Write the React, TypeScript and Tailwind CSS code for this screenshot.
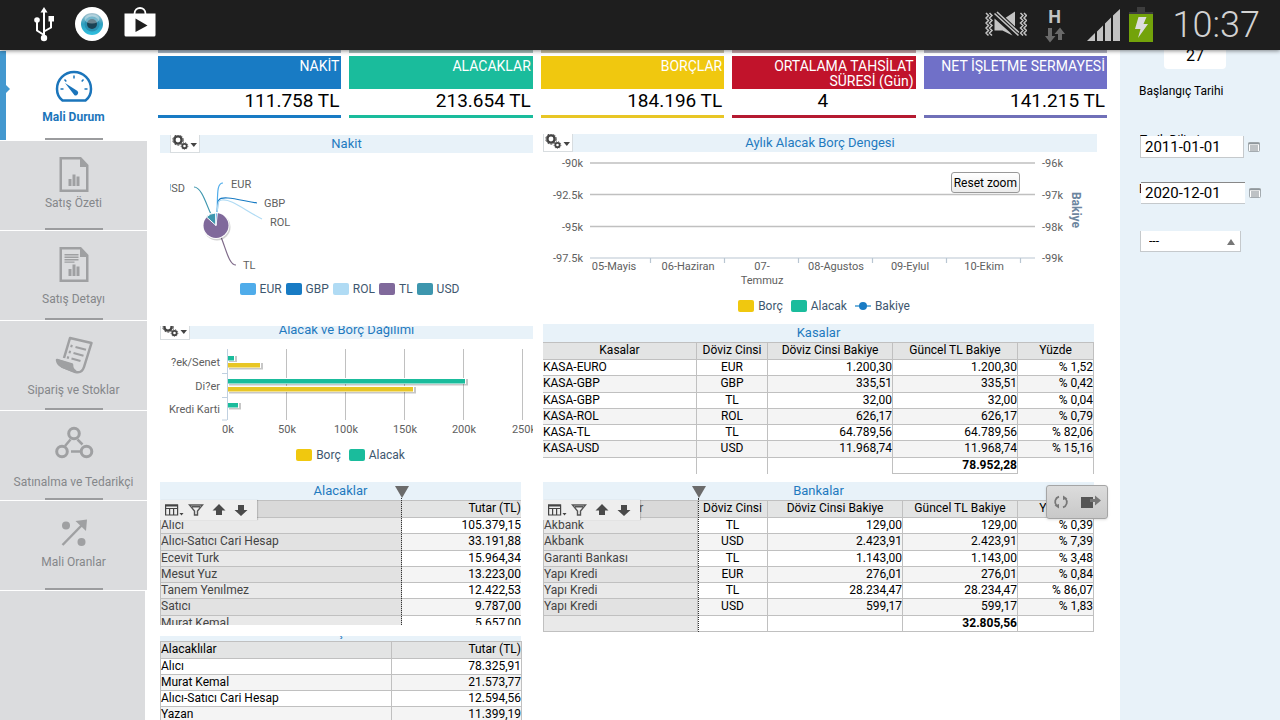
import type { ReactNode } from "react";

const kpis = [
  { title: "NAKİT", value: "111.758 TL", bg: "bg-[#187bc4]", line: "border-[#187bc4]", tint: "bg-[#a5b5c4]", align: "text-right" },
  { title: "ALACAKLAR", value: "213.654 TL", bg: "bg-[#1abc9c]", line: "border-[#1abc9c]", tint: "bg-[#a6bfba]", align: "text-right" },
  { title: "BORÇLAR", value: "184.196 TL", bg: "bg-[#f0c80f]", line: "border-[#e8c625]", tint: "bg-[#c6bfa2]", align: "text-right" },
  { title: "ORTALAMA TAHSİLAT SÜRESİ (Gün)", value: "4", bg: "bg-[#c1132b]", line: "border-[#b51a31]", tint: "bg-[#c4a4a8]", align: "text-center" },
  { title: "NET İŞLETME SERMAYESİ", value: "141.215 TL", bg: "bg-[#7070c8]", line: "border-[#7070b8]", tint: "bg-[#b5b5c4]", align: "text-right" },
];

const kasalar = [
  ["KASA-EURO", "EUR", "1.200,30", "1.200,30", "% 1,52"],
  ["KASA-GBP", "GBP", "335,51", "335,51", "% 0,42"],
  ["KASA-GBP", "TL", "32,00", "32,00", "% 0,04"],
  ["KASA-ROL", "ROL", "626,17", "626,17", "% 0,79"],
  ["KASA-TL", "TL", "64.789,56", "64.789,56", "% 82,06"],
  ["KASA-USD", "USD", "11.968,74", "11.968,74", "% 15,16"],
];

const bankalar = [
  ["Akbank", "TL", "129,00", "129,00", "% 0,39"],
  ["Akbank", "USD", "2.423,91", "2.423,91", "% 7,39"],
  ["Garanti Bankası", "TL", "1.143,00", "1.143,00", "% 3,48"],
  ["Yapı Kredi", "EUR", "276,01", "276,01", "% 0,84"],
  ["Yapı Kredi", "TL", "28.234,47", "28.234,47", "% 86,07"],
  ["Yapı Kredi", "USD", "599,17", "599,17", "% 1,83"],
];

const alacaklar = [
  ["Alıcı", "105.379,15"],
  ["Alıcı-Satıcı Cari Hesap", "33.191,88"],
  ["Ecevit Turk", "15.964,34"],
  ["Mesut Yuz", "13.223,00"],
  ["Tanem Yenılmez", "12.422,53"],
  ["Satıcı", "9.787,00"],
  ["Murat Kemal", "5.657,00"],
];

const alacaklilar = [
  ["Alıcı", "78.325,91"],
  ["Murat Kemal", "21.573,77"],
  ["Alıcı-Satıcı Cari Hesap", "12.594,56"],
  ["Yazan", "11.399,19"],
];

/* ---------- status bar ---------- */

const StatusBar = () => (
  <header className="relative z-20 flex h-[50px] shrink-0 items-center justify-between bg-[#1e1e1e] pl-8 pr-5 shadow-[0_1px_4px_rgba(0,0,0,0.45)]">
    <div className="flex items-center gap-4">
      <svg className="h-9 w-6" viewBox="0 0 24 36" fill="none" stroke="#fff" strokeWidth="2">
        <path d="M12 5v26M12 28l-7-4.5V14M12 24.500l7-4V12" />
        <path d="M12 0l3.500 5.500h-7z" fill="#fff" stroke="none" />
        <circle cx="5" cy="13" r="2.800" fill="#fff" stroke="none" />
        <rect x="16.500" y="9" width="5.500" height="5.500" fill="#fff" stroke="none" />
        <circle cx="12" cy="31" r="3.200" fill="#fff" stroke="none" />
      </svg>
      <svg className="size-10" viewBox="0 0 40 40">
        <defs>
          <linearGradient id="iris" x1="0" y1="0" x2="0" y2="1">
            <stop offset="0" stopColor="#a9c4d0" />
            <stop offset="0.5" stopColor="#2f9fbf" />
            <stop offset="1" stopColor="#2fc0e0" />
          </linearGradient>
        </defs>
        <circle cx="20" cy="19" r="17" fill="#fff" />
        <circle cx="20" cy="19" r="11" fill="url(#iris)" />
        <circle cx="20" cy="19" r="7.500" fill="#2a8fb0" />
        <circle cx="20" cy="19" r="5" fill="#1b4254" />
        <ellipse cx="20" cy="14" rx="7.500" ry="4.500" fill="#fff" opacity="0.35" />
      </svg>
      <svg className="-ml-1 h-[38px] w-8" viewBox="0 0 32 38">
        <path d="M10.500 8c0-8 11-8 11 0" fill="none" stroke="#fff" strokeWidth="1.800" />
        <path d="M.5 7.500h31V29a1.500 1.500 0 0 1-1.500 1.500H2A1.500 1.500 0 0 1 .5 29z" fill="#fff" />
        <path d="M11.500 12.500v13.500l12-6.500z" fill="#1e1e1e" />
      </svg>
    </div>
    <div className="flex items-center gap-2">
      <svg className="mr-1 h-7 w-[42px]" viewBox="0 0 42 28" fill="none" stroke="#c3c3c3">
        <path
          d="M1 2l2.500 2.500L1 7l2.500 2.500L1 12l2.500 2.500L1 17l2.500 2.500L1 22l2.500 2.500M4.500 2L7 4.500 4.500 7 7 9.500 4.500 12 7 14.500 4.500 17 7 19.500 4.500 22 7 24.500M35.500 2L38 4.500 35.500 7 38 9.500 35.500 12l2.500 2.500-2.500 2.500 2.500 2.500-2.500 2.500 2.500 2.500M39 2l2.500 2.500L39 7l2.500 2.500L39 12l2.500 2.500L39 17l2.500 2.500L39 22l2.500 2.500"
          strokeWidth="1.500"
        />
        <path d="M19.500 7.500L30 .5v16zM9.500 7.500l15 13.500 3 3.500-10-5h-8z" fill="#c3c3c3" stroke="none" />
        <path d="M11 1l23 21.500" stroke="#1e1e1e" strokeWidth="5" />
        <path d="M9.500 2.500l24 22M12 1l22 20.500" strokeWidth="1.600" />
      </svg>
      <div className="mr-2 flex w-8 flex-col items-center">
        <span className="text-lg/5 font-bold text-[#c3c3c3]">H</span>
        <svg className="h-4 w-5" viewBox="0 0 20 16" fill="#6a6a6a">
          <path d="M3 1h4v8h3.500L5 15.500 0 9h3z" />
          <path d="M13 13V7H9.500L15 .5 20 7h-3v6z" />
        </svg>
      </div>
      <svg className="h-8 w-[34px]" viewBox="0 0 34 32" fill="#c3c3c3">
        <path d="M0 32l8-8v8zM10 22.500l6-6V32h-6zM18 14.500l6-6V32h-6zM26 6.500L33 0v32h-7z" />
      </svg>
      <svg className="h-9 w-6" viewBox="0 0 24 36">
        <rect x="8" y="0" width="8" height="5" fill="#3d3d3d" />
        <rect x="0" y="5" width="24" height="2" fill="#3d3d3d" />
        <rect x="0" y="7" width="24" height="28" fill="#73a30a" />
        <path d="M9.500 10h8l-3 7h4.500L9 31l2.500-9H6z" fill="#ddd" />
      </svg>
      <span className="ml-3 text-[36px]/10 font-light text-[#d2d2d2]">10:37</span>
    </div>
  </header>
);

/* ---------- sidebar ---------- */

const GaugeIcon = () => (
  <svg className="h-[43px] w-10" viewBox="0 0 40 43" fill="none" stroke="#1b75bb" strokeWidth="2.500">
    <path d="M8.500 34.500C4.500 31.500 3 27.500 3 23a17 17 0 0 1 34 0c0 4.500-1.500 8.500-5.500 11.500z" strokeLinejoin="round" />
    <path d="M20 9.500v3M29.500 13.500l-1.800 2M10.500 13.500l1.800 2M33.500 23h-3M6.500 23h3" strokeWidth="1.500" />
    <path d="M11 17l12.500 8a2.700 2.700 0 0 1-3 4.300z" fill="#1b75bb" stroke="none" />
  </svg>
);

const ReportIcon = ({ detailed }: { detailed?: boolean }) => (
  <svg className={detailed ? "h-[45px] w-10" : "h-[39px] w-10"} viewBox={detailed ? "0 0 40 45" : "0 0 40 39"} fill="#9fa0a2">
    <path d="M5.500 1H27l7.500 8v27h-29zM8 3.500v30h24V11h-6V3.500z" fillRule="evenodd" />
    <path d="M14.500 23h3v7h-3zM18.500 18.500h3V30h-3zM22.500 20.500h3V30h-3z" />
    {detailed && <path d="M10.500 8h14v1.600h-14zM10.500 10.500h14v1.600h-14zM10.500 13h14v1.600h-14zM10.500 15.500h10v1.200h-10z" />}
  </svg>
);

const OrderIcon = () => (
  <svg className="h-[46px] w-10" viewBox="0 0 40 46" fill="none" stroke="#9fa0a2" strokeWidth="2.500" strokeLinejoin="round">
    <path d="M10 22L16 2l21.500 5L30 31c-1.500 4.500-4.500 6-8.500 5L8 30.500c-3-1.500-4.500-3.500-5-6.500l15 4.500c0 4 1.500 6 4 7" />
    <path d="M3.500 24.500l14 4.500c0 2.500.5 4.500 2 6L8 30.500z" fill="#9fa0a2" />
    <path d="M21.500 11l10.500 2.800M19.500 17l10 2.800M17.500 22.500l9 2.500" strokeWidth="2.200" />
    <path d="M16.500 9.800l2 .6M14.800 15.700l2 .6M13 21.300l2 .6" strokeWidth="2.500" />
  </svg>
);

const NetworkIcon = () => (
  <svg className="h-12 w-10" viewBox="0 0 40 48" fill="none" stroke="#9fa0a2" strokeWidth="3">
    <circle cx="20" cy="7.500" r="5.300" />
    <circle cx="8" cy="25.500" r="5.300" />
    <circle cx="32.500" cy="25.500" r="5.300" />
    <path d="M16.500 13.500L11 20M23.500 13.500l5 5M17 25.500h9.500" strokeWidth="2.500" />
  </svg>
);

const RatioIcon = () => (
  <svg className="h-[38px] w-10" viewBox="0 0 40 38" fill="#9fa0a2">
    <path d="M8.500 29L29 8" stroke="#9fa0a2" strokeWidth="2.500" />
    <path d="M21.500 5L33 3.500 32 15z" />
    <circle cx="12" cy="9.500" r="4" />
    <circle cx="27.500" cy="26" r="4" />
  </svg>
);

const menu: { label: string; icon: ReactNode; active?: boolean }[] = [
  { label: "Mali Durum", icon: <GaugeIcon />, active: true },
  { label: "Satış Özeti", icon: <ReportIcon /> },
  { label: "Satış Detayı", icon: <ReportIcon detailed /> },
  { label: "Sipariş ve Stoklar", icon: <OrderIcon /> },
  { label: "Satınalma ve Tedarikçi", icon: <NetworkIcon /> },
  { label: "Mali Oranlar", icon: <RatioIcon /> },
];

const Sidebar = () => (
  <nav className="flex w-[147px] shrink-0 flex-col pt-px">
    {menu.map((item) => (
      <a
        key={item.label}
        href="#"
        className={
          item.active
            ? "relative flex h-[90px] shrink-0 flex-col items-center border-b border-white bg-white pt-[15px] text-[#1b75bb]"
            : "relative flex h-[90px] shrink-0 flex-col items-center border-b border-white bg-[#dbdcde] pt-[15px] text-[#85878a]"
        }
      >
        {item.icon}
        <span className={item.active ? "whitespace-nowrap text-xs/4 font-bold" : "whitespace-nowrap text-xs/4"}>{item.label}</span>
        {item.active && (
          <span className="absolute inset-y-0 left-0 w-1.5 bg-[#4398cf]">
            <svg className="absolute left-1.5 top-[34px] h-2 w-1" viewBox="0 0 4 8" fill="#4398cf">
              <path d="M0 0l4 4-4 4z" />
            </svg>
          </span>
        )}
        <span className="absolute bottom-0 h-0.5 w-[58px] bg-[#9b9c9e]" />
      </a>
    ))}
    <div className="mr-0.5 flex-1 bg-[#dbdcde]" />
  </nav>
);

/* ---------- shared pieces ---------- */

const PanelTitle = ({ children, height = "h-[18px]" }: { children: ReactNode; height?: string }) => (
  <h2 className={`${height} flex flex-col items-center justify-end overflow-hidden bg-[#e8f2f9] text-[13px]/[18px] text-[#1f7abf]`}>
    <span className="shrink-0">{children}</span>
  </h2>
);

const GearButton = ({ className }: { className: string }) => (
  <button
    type="button"
    aria-label="Ayarlar"
    className={`${className} absolute top-0 flex items-end overflow-hidden border border-t-0 border-[#d8dde0] bg-white`}
  >
    <svg className="h-[18px] w-7 shrink-0" viewBox="0 0 28 18" fill="none" stroke="#444">
      <circle cx="7" cy="6" r="3.600" strokeWidth="2.400" />
      <circle cx="7" cy="6" r="5.200" strokeWidth="1" strokeDasharray="2 1.300" />
      <circle cx="13.500" cy="12" r="2.200" strokeWidth="1.800" />
      <circle cx="13.500" cy="12" r="3.400" strokeWidth="0.800" strokeDasharray="1.300 1" />
      <path d="M19.500 9h6.500l-3.200 4z" fill="#444" stroke="none" />
    </svg>
  </button>
);

const LegendItem = ({ color, label }: { color: string; label: string }) => (
  <span className="flex items-center gap-1">
    <span className={`${color} h-3 w-4 rounded-xs`} />
    {label}
  </span>
);

const GridToolbar = () => (
  <div className="absolute left-0 top-0 flex h-5 w-[97px] items-center gap-2 bg-[#eeeeee] pl-1 shadow-[1px_0_1px_rgba(0,0,0,0.15)]">
    <button type="button" aria-label="Kolonlar">
      <svg className="h-4 w-5" viewBox="0 0 20 16" fill="none" stroke="#444" strokeWidth="1.200">
        <path d="M1.600 3h12v10h-12zM1.600 6.500h12M5.600 6v7M9.600 6v7" />
        <path d="M1 2.500h13v2H1z" fill="#444" stroke="none" />
        <path d="M15.500 11h4l-2 2.500z" fill="#444" stroke="none" />
      </svg>
    </button>
    <button type="button" aria-label="Filtrele" className="-ml-1">
      <svg className="h-4 w-4" viewBox="0 0 16 16" fill="none" stroke="#555" strokeWidth="1.400">
        <path d="M1.500 3h13L9.500 9v4h-3V9zM4 4.800h8" />
      </svg>
    </button>
    <button type="button" aria-label="Artan sırala">
      <svg className="h-4 w-3.5" viewBox="0 0 14 16" fill="#4a4a4a">
        <path d="M7 2l6.500 6.500H10V13H4V8.500H.5z" />
      </svg>
    </button>
    <button type="button" aria-label="Azalan sırala">
      <svg className="h-4 w-3.5" viewBox="0 0 14 16" fill="#4a4a4a">
        <path d="M7 14L.5 8H4V3h6v5h3.500z" />
      </svg>
    </button>
  </div>
);

// freeze handle with the dotted line under it
const FreezeMarker = ({ className }: { className: string }) => (
  <div className={`${className} absolute -top-3.5 bottom-0 flex flex-col items-center`}>
    <svg className="h-3 w-3.5 shrink-0" viewBox="0 0 14 12" fill="#6b6b6b">
      <path d="M0 0h14L7 12z" />
    </svg>
    <span className="flex-1 border-l border-dotted border-[#333]" />
  </div>
);

const cell = "overflow-visible whitespace-nowrap border-b border-r border-[#c0c0c0] p-0 align-top";

type CurrencyTableProps = { name: string; rows: string[][]; total: string; cols: string[]; frozen?: boolean };

const CurrencyTable = ({ name, rows, total, cols, frozen }: CurrencyTableProps) => (
  <table className="h-[132px] w-full table-fixed border-separate border-spacing-0 border-t border-[#c0c0c0] text-xs/[14px] text-black">
    <colgroup>
      {cols.map((c, i) => (
        <col key={i} className={c} />
      ))}
    </colgroup>
    <thead>
      <tr className="h-[17px] bg-[#e3e4e4]">
        <th className={frozen ? `${cell} bg-[#d9d9d9] font-normal text-[#555]` : `${cell} font-normal`}>{name}</th>
        {["Döviz Cinsi", "Döviz Cinsi Bakiye", "Güncel TL Bakiye", "Yüzde"].map((h) => (
          <th key={h} className={`${cell} font-normal`}>
            {h}
          </th>
        ))}
      </tr>
    </thead>
    <tbody>
      {rows.map((row, r) => (
        <tr key={r} className={r % 2 ? "bg-[#f4f4f4]" : "bg-white"}>
          <td className={frozen ? `${cell} ${r % 2 ? "bg-[#e2e2e2]" : "bg-[#e9e9e9]"} border-l text-[#444]` : cell}>{row[0]}</td>
          <td className={`${cell} text-center`}>{row[1]}</td>
          <td className={`${cell} text-right`}>{row[2]}</td>
          <td className={`${cell} text-right`}>{row[3]}</td>
          <td className={`${cell} text-right`}>{row[4]}</td>
        </tr>
      ))}
      <tr>
        <td className={frozen ? `${cell} border-l bg-[#e9e9e9]` : "border-r border-[#c0c0c0]"} />
        <td className={frozen ? cell : "border-r border-[#c0c0c0]"} />
        <td className={frozen ? cell : "border-r border-[#c0c0c0]"} />
        <td className={`${cell} text-right font-bold`}>{total}</td>
        <td className={frozen ? cell : "border-r border-[#c0c0c0]"} />
      </tr>
    </tbody>
  </table>
);

type AmountTableProps = { name: string; rows: string[][]; cols: string[]; frozen?: boolean };

const AmountTable = ({ name, rows, cols, frozen }: AmountTableProps) => (
  <table
    className={
      frozen
        ? "h-[132px] w-full table-fixed border-separate border-spacing-0 border-l border-t border-[#c0c0c0] text-xs/[14px] text-black"
        : "h-[82px] w-full table-fixed border-separate border-spacing-0 border-l border-t border-[#c0c0c0] text-xs/[14px] text-black"
    }
  >
    <colgroup>
      {cols.map((c, i) => (
        <col key={i} className={c} />
      ))}
    </colgroup>
    <thead>
      <tr className="h-[17px] bg-[#e3e4e4]">
        <th className={frozen ? `${cell} bg-[#d9d9d9] text-left font-normal` : `${cell} text-left font-normal`}>{name}</th>
        <th className={`${cell} text-right font-normal`}>Tutar (TL)</th>
      </tr>
    </thead>
    <tbody>
      {rows.map((row, r) => (
        <tr key={r} className={r % 2 ? "bg-[#f4f4f4]" : "bg-white"}>
          <td className={frozen ? `${cell} ${r % 2 ? "bg-[#e2e2e2]" : "bg-[#e9e9e9]"} text-[#444]` : cell}>{row[0]}</td>
          <td className={`${cell} text-right`}>{row[1]}</td>
        </tr>
      ))}
    </tbody>
  </table>
);

/* ---------- charts ---------- */

const CashPie = () => (
  <svg className="h-[127px] w-full" viewBox="0 0 373 127" fontSize="11" fill="none">
    <g strokeWidth="1.200">
      <path d="M34 34c8 0 13 20 17 27" stroke="#3d96ae" />
      <path d="M63 30c-7 0-5 14-6 31" stroke="#4facea" />
      <path d="M97 50c-18-3-35-8-38-3-2 2-1 8-2 14" stroke="#187bc4" />
      <path d="M102 66C86 58 70 45 62 47c-5 0-4 6-5 14" stroke="#b0dbf4" />
      <path d="M61 84c5 12 8 28 15 28" stroke="#7f6b8a" />
    </g>
    <circle cx="57" cy="74" r="13.500" fill="#000" opacity="0.18" />
    <circle cx="56" cy="72.500" r="13.500" fill="#fff" />
    <circle cx="56" cy="72.500" r="12.500" fill="#80699b" />
    <path d="M56 72.500L46.500 64A12.500 12.500 0 0 1 55.500 60z" fill="#3d96ae" stroke="#fff" />
    <path d="M56 72.500L55.500 60h2z" fill="#4facea" stroke="#fff" strokeWidth="0.800" />
    <g fill="#606060">
      <text x="4" y="39">USD</text>
      <text x="71" y="35">EUR</text>
      <text x="104" y="54">GBP</text>
      <text x="110" y="73">ROL</text>
      <text x="83" y="116">TL</text>
    </g>
    <path d="M0 25h10v20H0z" fill="#fff" />
  </svg>
);

const distribution = [
  { y: 17, w: 6, color: "#1abc9c" },
  { y: 24, w: 32, color: "#e8c625" },
  { y: 40, w: 237, color: "#1abc9c" },
  { y: 48, w: 185, color: "#e8c625" },
  { y: 64, w: 10, color: "#1abc9c" },
];

const DistributionChart = () => (
  <svg className="h-[105px] w-full" viewBox="0 0 373 105" fontSize="11" fill="#606060">
    <path d="M126.500 10v71M185.500 10v71M244.500 10v71M303.500 10v71M362.500 10v71" stroke="#c0c0c0" />
    <path d="M67.500 10v71M62 34.500h5M62 58.500h5M62 81h5" stroke="#c0d0e0" />
    {distribution.map((b) => (
      <g key={b.y}>
        <rect x="69" y={b.y} width={b.w + 2} height="6.500" fill="#000" opacity="0.22" />
        <rect x="68" y={b.y - 1} width={b.w + 1} height="6" fill="#fff" />
        <rect x="68" y={b.y} width={b.w} height="4.500" fill={b.color} />
      </g>
    ))}
    <g textAnchor="end">
      <text x="60" y="27">?ek/Senet</text>
      <text x="60" y="51">Di?er</text>
      <text x="60" y="74">Kredi Karti</text>
    </g>
    <g textAnchor="middle">
      <text x="68" y="94">0k</text>
      <text x="127" y="94">50k</text>
      <text x="186" y="94">100k</text>
      <text x="245" y="94">150k</text>
      <text x="304" y="94">200k</text>
      <text x="364" y="94">250k</text>
    </g>
  </svg>
);

const BalanceChart = () => (
  <svg className="h-[145px] w-full" viewBox="0 0 554 145" fontSize="11" fill="#606060">
    <path d="M47 11h445M47 42.500h445M47 74.500h445" stroke="#c0c0c0" strokeWidth="1.500" />
    <path d="M47 106h445M107.500 106v5M181.500 106v5M255.500 106v5M329.500 106v5M403.500 106v5M477.500 106v5" stroke="#b9c6d2" strokeWidth="1.200" />
    <g textAnchor="end">
      <text x="40" y="15">-90k</text>
      <text x="40" y="47">-92.5k</text>
      <text x="40" y="79">-95k</text>
      <text x="40" y="110">-97.5k</text>
    </g>
    <g>
      <text x="499" y="15">-96k</text>
      <text x="499" y="47">-97k</text>
      <text x="499" y="79">-98k</text>
      <text x="499" y="110">-99k</text>
    </g>
    <g textAnchor="middle">
      <text x="71" y="118">05-Mayis</text>
      <text x="145" y="118">06-Haziran</text>
      <text x="219" y="118">07-</text>
      <text x="219" y="132">Temmuz</text>
      <text x="293" y="118">08-Agustos</text>
      <text x="367" y="118">09-Eylul</text>
      <text x="441" y="118">10-Ekim</text>
    </g>
    <text transform="translate(529 58) rotate(90)" textAnchor="middle" fontSize="12" fontWeight="bold" fill="#6d869f">
      Bakiye
    </text>
  </svg>
);

/* ---------- filters ---------- */

const CalendarIcon = () => (
  <svg className="h-3 w-3 shrink-0" viewBox="0 0 12 12" fill="none" stroke="#8f979c" strokeWidth="0.800">
    <rect x="0.500" y="1.500" width="11" height="9" rx="1" fill="#fff" />
    <path d="M.5 2.500h11" strokeWidth="1.600" />
    <path d="M2 5h8M2 7h8M2 9h8M3 4v6M5 4v6M7 4v6M9 4v6" strokeWidth="0.700" />
  </svg>
);

const Filters = () => (
  <aside className="flex w-40 shrink-0 flex-col bg-[#e8f2f9] pl-5 text-xs text-black">
    <div className="ml-6 flex h-[19px] w-[62px] justify-center overflow-hidden rounded-b bg-white text-base/3">27</div>
    <label htmlFor="start" className="-ml-px mt-3.5 leading-4">
      Başlangıç Tarihi
    </label>
    <div className="mt-[34px] h-[3px] overflow-hidden leading-[14px]">
      <span className="block">Tarih Dilimi</span>
    </div>
    <div className="flex items-center gap-1">
      <input id="start" type="text" defaultValue="2011-01-01" className="h-[22px] w-[104px] border border-t-0 border-[#c5c9cc] bg-white px-1 text-[15px]" />
      <CalendarIcon />
    </div>
    <div className="relative mt-6 flex items-center gap-1">
      <label htmlFor="end" className="absolute -left-px top-0 leading-[14px]">
        Bitiş Tarihi
      </label>
      <input id="end" type="text" defaultValue="2020-12-01" className="relative ml-px h-[22px] w-[104px] border border-x-0 border-b-[#c5c9cc] border-t-[#888] bg-white px-1 text-[15px]" />
      <CalendarIcon />
    </div>
    <div className="relative mt-[27px] w-[101px]">
      <select aria-label="Filtre" className="block h-[21px] w-full appearance-none border border-t-0 border-[#c5c9cc] bg-white pl-2 text-xs">
        <option>---</option>
      </select>
      <svg className="pointer-events-none absolute right-1.5 top-2 h-1.5 w-2" viewBox="0 0 8 6" fill="#777">
        <path d="M0 6l4-6 4 6z" />
      </svg>
    </div>
  </aside>
);

const App = () => (
  <div className="flex h-screen flex-col overflow-hidden bg-white font-['Roboto',sans-serif]">
    <StatusBar />
    <div className="flex min-h-0 flex-1">
      <Sidebar />

      <main className="min-w-0 flex-1 overflow-hidden">
        {/* KPI cards */}
        <section className="grid grid-cols-5 gap-2 pl-[11px] pr-[13px]">
          {kpis.map((k) => (
            <div key={k.title} className={`${k.line} border-b-[3px]`}>
              <div className={`${k.tint} h-[3px]`} />
              <div className={`${k.bg} mt-[3px] h-[33px] overflow-hidden pr-0.5 pt-[3px] text-right text-sm/[15px] text-white`}>{k.title}</div>
              <div className={`${k.align} h-[26px] pr-0.5 text-[19px]/6`}>{k.value}</div>
            </div>
          ))}
        </section>

        <div className="mt-4 grid grid-cols-[373fr_554fr] gap-2.5 pl-[13px] pr-[23px]">
          <div className="min-w-0">
            <section className="relative mt-px h-[191px]">
              <PanelTitle>Nakit</PanelTitle>
              <GearButton className="left-2.5 h-[18px]" />
              <CashPie />
              <div className="flex justify-center gap-1 pl-1.5 text-xs/[18px] text-[#3e576f]">
                <LegendItem color="bg-[#4facea]" label="EUR" />
                <LegendItem color="bg-[#187bc4]" label="GBP" />
                <LegendItem color="bg-[#b0dbf4]" label="ROL" />
                <LegendItem color="bg-[#80699b]" label="TL" />
                <LegendItem color="bg-[#3d96ae]" label="USD" />
              </div>
            </section>

            <section className="relative h-[156px]">
              <PanelTitle height="h-[13px]">Alacak ve Borç Dağılımı</PanelTitle>
              <GearButton className="left-0 h-[14px]" />
              <DistributionChart />
              <div className="mt-0.5 flex justify-center gap-2 pl-2 text-xs/[18px] text-[#3e576f]">
                <LegendItem color="bg-[#f0c80f]" label="Borç" />
                <LegendItem color="bg-[#1abc9c]" label="Alacak" />
              </div>
            </section>

            <section className="mr-3">
              <PanelTitle>Alacaklar</PanelTitle>
              <div className="relative">
                <div className="h-[125px] overflow-hidden">
                  <AmountTable name="Alacaklar" rows={alacaklar} cols={["w-[241px]", "w-[120px]"]} frozen />
                </div>
                <GridToolbar />
                <FreezeMarker className="left-[65%]" />
              </div>
            </section>

            <section className="mr-3 mt-[11px]">
              <PanelTitle height="h-[5px]">ş</PanelTitle>
              <AmountTable name="Alacaklılar" rows={alacaklilar} cols={["w-[231px]", "w-[130px]"]} />
            </section>
          </div>

          <div className="min-w-0">
            <section className="relative h-[190px]">
              <PanelTitle>Aylık Alacak Borç Dengesi</PanelTitle>
              <GearButton className="left-0 h-[18px]" />
              <div className="relative">
                <BalanceChart />
                <button
                  type="button"
                  className="absolute right-[77px] top-5 h-[21px] rounded-[3px] border border-[#999] bg-gradient-to-b from-white to-[#ececec] px-0.5 text-xs/[18px]"
                >
                  Reset zoom
                </button>
              </div>
              <div className="flex justify-center gap-2 pl-2 text-xs/[18px] text-[#3e576f]">
                <LegendItem color="bg-[#f0c80f]" label="Borç" />
                <LegendItem color="bg-[#1abc9c]" label="Alacak" />
                <span className="flex items-center gap-1">
                  <svg className="h-3 w-4" viewBox="0 0 16 12">
                    <path d="M0 6h16" stroke="#4398cf" strokeWidth="1.500" />
                    <circle cx="8" cy="6" r="4" fill="#187bc4" />
                  </svg>
                  Bakiye
                </span>
              </div>
            </section>

            <section className="mr-[3px]">
              <PanelTitle>Kasalar</PanelTitle>
              <CurrencyTable
                name="Kasalar"
                rows={kasalar}
                total="78.952,28"
                cols={["w-[154px]", "w-[71px]", "w-[125px]", "w-[125px]", "w-[76px]"]}
              />
            </section>

            <section className="relative mr-[3px] mt-2">
              <PanelTitle>Bankalar</PanelTitle>
              <div className="relative">
                <CurrencyTable
                  name="Bankalar"
                  rows={bankalar}
                  total="32.805,56"
                  cols={["w-[155px]", "w-[70px]", "w-[135px]", "w-[115px]", "w-[76px]"]}
                  frozen
                />
                <GridToolbar />
                <FreezeMarker className="left-[27%]" />
              </div>
              <div className="absolute -right-3.5 top-[3px] flex h-[34px] w-[62px] items-center justify-center gap-3 rounded-[3px] border border-[#a5a5a5] bg-gradient-to-b from-[#dcdcdc] to-[#c8c8c8] shadow">
                <button type="button" aria-label="Yenile">
                  <svg className="h-4 w-4" viewBox="0 0 16 16" fill="none" stroke="#777" strokeWidth="1.800">
                    <path d="M6 2.600A5.500 5.500 0 0 0 3.500 11.500M10 13.400A5.500 5.500 0 0 0 12.500 4.500" />
                    <path d="M1.500 11.500l4.500-1.500v4.500zM14.500 4.500L10 6V1.500z" fill="#777" stroke="none" />
                  </svg>
                </button>
                <button type="button" aria-label="Dışa aktar">
                  <svg className="h-4 w-5" viewBox="0 0 20 16" fill="#555">
                    <path d="M0 3h12v11H0z" />
                    <path d="M9 5h5V1.500l6 5-6 5V8H9z" fill="#777" />
                  </svg>
                </button>
              </div>
            </section>
          </div>
        </div>
      </main>

      <Filters />
    </div>
  </div>
);

export default App;
